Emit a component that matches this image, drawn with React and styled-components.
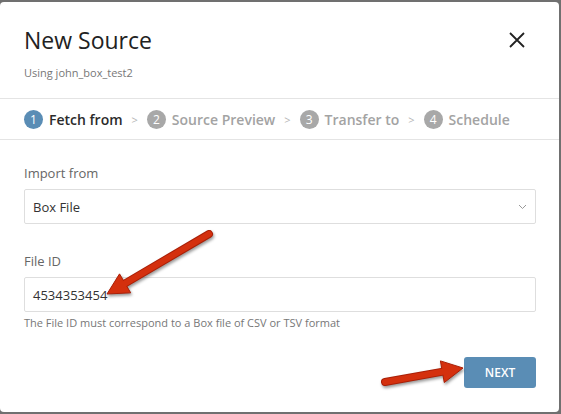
import React from 'react'
import styled, { createGlobalStyle } from 'styled-components'

const Global = createGlobalStyle`
	html, body {
		margin: 0;
		padding: 0;
		background: #707070;
		font-family: 'Open Sans', 'Liberation Sans', sans-serif;
	}
`

const Page = styled.div`
	width: 561px;
	height: 414px;
	padding-top: 2px;
	box-sizing: border-box;
`

const Modal = styled.div`
	position: relative;
	width: 559px;
	height: 410px;
	background: #fff;
	border-radius: 4px;
	display: flex;
	flex-direction: column;
	overflow: hidden;
`

const Header = styled.header`
	display: flex;
	justify-content: space-between;
	align-items: flex-start;
	padding: 23px 24px 17px 24px;
	border-bottom: 1px solid #e4e4e4;
`

const TitleBlock = styled.div`
	display: flex;
	flex-direction: column;
	gap: 10px;
`

const Title = styled.h1`
	margin: 0;
	font-size: 23px;
	line-height: 30px;
	font-weight: 400;
	color: #222;
`

const Subtitle = styled.div`
	font-size: 11px;
	line-height: 16px;
	color: #777;
`

const Close = styled.button`
	border: 0;
	background: none;
	padding: 0;
	margin: 6px 9px 0 0;
	width: 18px;
	height: 18px;
	cursor: pointer;
`

const Steps = styled.nav`
	display: flex;
	align-items: center;
	height: 40px;
	padding: 0 24px;
	border-bottom: 1px solid #e4e4e4;
`

const Step = styled.div`
	display: flex;
	align-items: center;
	gap: 6px;
	font-size: 14px;
	font-weight: 600;
	color: ${(p) => (p.active ? '#2b2b2b' : '#a3a3a3')};
`

const StepNum = styled.span`
	width: 19px;
	height: 19px;
	border-radius: 50%;
	background: ${(p) => (p.active ? '#5a8db5' : '#a8a8a8')};
	color: #fff;
	font-size: 12px;
	font-weight: 400;
	display: flex;
	align-items: center;
	justify-content: center;
`

const Sep = styled.span`
	color: #b5b5b5;
	font-size: 11px;
	margin: 0 9px;
`

const Body = styled.div`
	flex: 1;
	display: flex;
	flex-direction: column;
	padding: 24px 23px 0 24px;
`

const Label = styled.label`
	font-size: 13px;
	line-height: 18px;
	color: #666;
	margin-top: ${(p) => p.gap || 0}px;
	margin-bottom: 7px;
`

const Field = styled.div`
	position: relative;
	height: 35px;
	box-sizing: border-box;
	border: 1px solid #dedede;
	border-radius: 2px;
	display: flex;
	align-items: center;
	justify-content: space-between;
	padding: 0 8px 0 8px;
	font-size: 13px;
	color: #333;
`

const Help = styled.div`
	font-size: 11px;
	line-height: 14px;
	color: #777;
	margin-top: 4px;
`

const Footer = styled.div`
	display: flex;
	justify-content: flex-end;
	margin-top: 27px;
`

const Next = styled.button`
	width: 72px;
	height: 31px;
	border: 0;
	border-radius: 3px;
	background: #5a8db5;
	color: #fff;
	font-family: inherit;
	font-size: 12px;
	font-weight: 600;
`

const Annotations = styled.svg`
	position: absolute;
	left: 0;
	top: 0;
	width: 559px;
	height: 410px;
	pointer-events: none;
	filter: drop-shadow(1px 2px 1.5px rgba(0, 0, 0, 0.4));
`

const steps = ['Fetch from', 'Source Preview', 'Transfer to', 'Schedule']

const Arrow = ({ tail, tip }) => {
	const dx = tip[0] - tail[0]
	const dy = tip[1] - tail[1]
	const len = Math.hypot(dx, dy)
	const ux = dx / len
	const uy = dy / len
	const nx = -uy
	const ny = ux
	const bx = tip[0] - 21 * ux
	const by = tip[1] - 21 * uy
	const head = [
		[tip[0], tip[1]],
		[bx + 11 * nx, by + 11 * ny],
		[bx - 11 * nx, by - 11 * ny],
	]
	return (
		<g>
			<line x1={tail[0]} y1={tail[1]} x2={bx + 2 * ux} y2={by + 2 * uy} stroke='#a91f07' strokeWidth='8' strokeLinecap='round' />
			<polygon points={head.map((p) => p.join(',')).join(' ')} fill='#d4300e' stroke='#a91f07' strokeWidth='1' strokeLinejoin='round' />
			<line x1={tail[0]} y1={tail[1]} x2={bx + 3 * ux} y2={by + 3 * uy} stroke='#d4300e' strokeWidth='6' strokeLinecap='round' />
		</g>
	)
}

export default function App() {
	return (
		<Page>
			<Global />
			<Modal>
				<Header>
					<TitleBlock>
						<Title>New Source</Title>
						<Subtitle>Using john_box_test2</Subtitle>
					</TitleBlock>
					<Close aria-label='close'>
						<svg width='18' height='18' viewBox='0 0 18 18'>
							<path d='M2 2 L16 16 M16 2 L2 16' stroke='#222' strokeWidth='1.8' fill='none' />
						</svg>
					</Close>
				</Header>
				<Steps>
					{steps.map((s, i) => (
						<React.Fragment key={s}>
							{i > 0 && <Sep>&gt;</Sep>}
							<Step active={i === 0}>
								<StepNum active={i === 0}>{i + 1}</StepNum>
								{s}
							</Step>
						</React.Fragment>
					))}
				</Steps>
				<Body>
					<Label>Import from</Label>
					<Field>
						Box File
						<svg width='9' height='6' viewBox='0 0 9 6'>
							<polyline points='1,1 4.5,4.5 8,1' stroke='#999' strokeWidth='1' fill='none' />
						</svg>
					</Field>
					<Label gap={28}>File ID</Label>
					<Field>4534353454</Field>
					<Help>The File ID must correspond to a Box file of CSV or TSV format</Help>
					<Footer>
						<Next>NEXT</Next>
					</Footer>
				</Body>
				<Annotations viewBox='0 0 559 410'>
					<Arrow tail={[209, 232]} tip={[107, 292]} />
					<Arrow tail={[385, 380]} tip={[463, 366]} />
				</Annotations>
			</Modal>
		</Page>
	)
}
